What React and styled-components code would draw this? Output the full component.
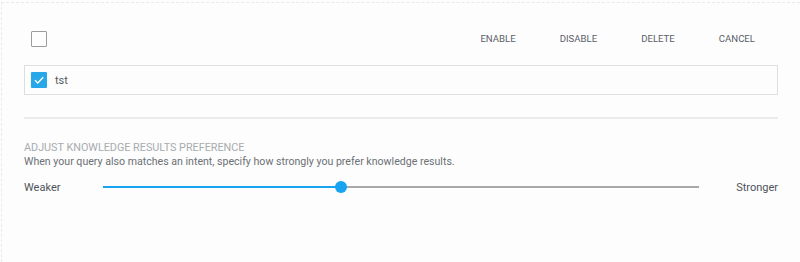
import React from "react";
import styled, { createGlobalStyle } from "styled-components";

const GlobalStyle = createGlobalStyle`
  html, body {
    margin: 0;
    padding: 0;
    background: #fcfdfc;
  }
  body {
    font-family: Roboto, "Liberation Sans", Arial, sans-serif;
  }
`;

const Page = styled.div`
  margin: 2px 0 0 1px;
  min-height: 260px;
  box-sizing: border-box;
  border-top: 1px dashed #efe8e8;
  border-left: 1px dashed #efe8e8;
  padding: 20px 22px 0 22px;
`;

const Toolbar = styled.div`
  display: flex;
  align-items: center;
  justify-content: space-between;
  height: 32px;
  padding-left: 7px;
`;

const Actions = styled.div`
  display: flex;
  align-items: center;
`;

const ActionButton = styled.button`
  border: none;
  background: none;
  padding: 0 22px;
  font-family: Roboto, "Liberation Sans", Arial, sans-serif;
  font-size: 9.6px;
  color: #5b5f6a;
  text-transform: uppercase;
  cursor: pointer;
  line-height: 32px;
  &:last-child {
    padding-right: 23px;
  }
`;

const Box = styled.span`
  box-sizing: border-box;
  width: 16px;
  height: 16px;
  border-radius: 1px;
  display: inline-flex;
  align-items: center;
  justify-content: center;
  flex-shrink: 0;
  border: ${(p) => (p.checked ? "none" : "1.5px solid #9c9c9c")};
  background: ${(p) => (p.checked ? "#29a8e9" : "transparent")};
`;

const ItemRow = styled.div`
  margin-top: 10px;
  height: 30px;
  box-sizing: border-box;
  border: 1px solid #dedede;
  display: flex;
  align-items: center;
  gap: 8px;
  padding-left: 6px;
`;

const ItemLabel = styled.span`
  font-size: 11px;
  color: #555a60;
`;

const Divider = styled.hr`
  border: none;
  height: 2px;
  background: #ececec;
  margin: 22px 0 0 0;
`;

const Heading = styled.div`
  margin-top: 22px;
  font-size: 10.8px;
  color: #a8abb0;
  text-transform: uppercase;
  line-height: 14px;
`;

const Description = styled.div`
  font-size: 10.6px;
  color: #6c7076;
  line-height: 14px;
`;

const SliderRow = styled.div`
  display: grid;
  grid-template-columns: 79px 1fr 79px;
  align-items: center;
  margin-top: 11px;
  height: 14px;
`;

const SideLabel = styled.span`
  font-size: 11px;
  color: #4f545b;
  text-align: ${(p) => (p.right ? "right" : "left")};
`;

const Track = styled.div`
  position: relative;
  height: 2px;
  background: #a9a9a9;
`;

const Fill = styled.div`
  height: 2px;
  background: #17a3ef;
`;

const Thumb = styled.div`
  position: absolute;
  top: 50%;
  width: 12px;
  height: 12px;
  border-radius: 50%;
  background: #17a3ef;
  transform: translate(-50%, -50%);
`;

const Check = () => (
  <svg width="12" height="12" viewBox="0 0 12 12">
    <path d="M2 6.2 L4.8 9 L10.2 3.3" fill="none" stroke="#fff" strokeWidth="1.4" />
  </svg>
);

const Checkbox = ({ checked }) => (
  <Box checked={checked}>{checked && <Check />}</Box>
);

export default function App() {
  const value = 40;
  return (
    <>
      <GlobalStyle />
      <Page>
        <Toolbar>
          <Checkbox />
          <Actions>
            <ActionButton>Enable</ActionButton>
            <ActionButton>Disable</ActionButton>
            <ActionButton>Delete</ActionButton>
            <ActionButton>Cancel</ActionButton>
          </Actions>
        </Toolbar>
        <ItemRow>
          <Checkbox checked />
          <ItemLabel>tst</ItemLabel>
        </ItemRow>
        <Divider />
        <Heading>Adjust knowledge results preference</Heading>
        <Description>
          When your query also matches an intent, specify how strongly you prefer knowledge results.
        </Description>
        <SliderRow>
          <SideLabel>Weaker</SideLabel>
          <Track>
            <Fill style={{ width: `${value}%` }} />
            <Thumb style={{ left: `${value}%` }} />
          </Track>
          <SideLabel right>Stronger</SideLabel>
        </SliderRow>
      </Page>
    </>
  );
}
